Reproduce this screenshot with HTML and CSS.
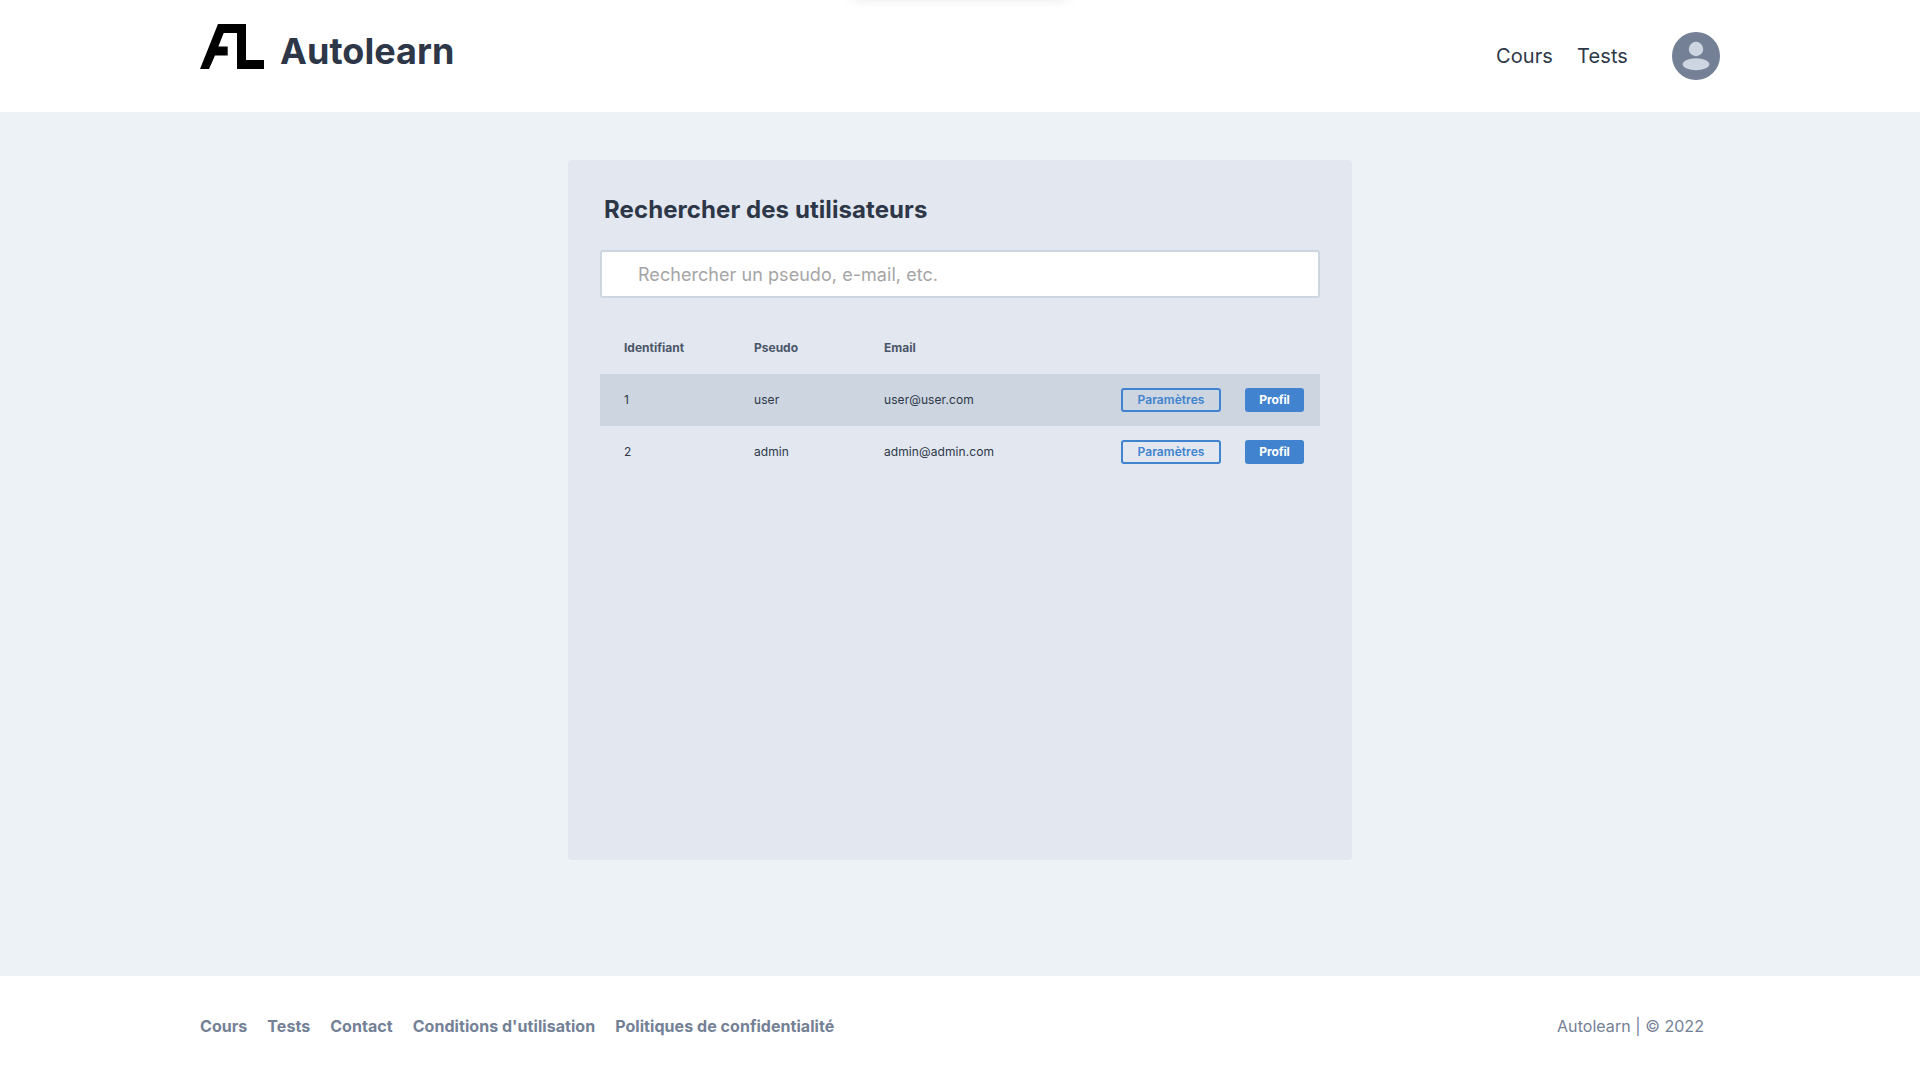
FILE: index.html
```
<!DOCTYPE html>
<html lang="fr">
<head>
<meta charset="utf-8">
<title>Autolearn</title>
<link rel="stylesheet" href="styles.css">
</head>
<body>
<div class="toast-shadow"></div>
<header class="header">
  <a class="brand">
    <svg class="logo" width="64" height="46" viewBox="0 0 64 46"><path d="M18 0H46V36H64V45H37V9H23.700L18.400 22.500H27.700V31.500H15L9 45H0Z"/></svg>
    <span class="brand-name">Autolearn</span>
  </a>
  <nav class="nav">
    <a class="nav-link">Cours</a>
    <a class="nav-link">Tests</a>
    <svg class="avatar" width="48" height="48" viewBox="0 0 48 48"><circle class="avatar-bg" cx="24" cy="24" r="24"/><circle class="avatar-fg" cx="24" cy="17" r="7.200"/><ellipse class="avatar-fg" cx="24" cy="32.300" rx="13.300" ry="6"/></svg>
  </nav>
</header>
<main class="main">
  <section class="panel">
    <h1 class="title">Rechercher des utilisateurs</h1>
    <input class="search" type="text" placeholder="Rechercher un pseudo, e-mail, etc.">
    <div class="table">
      <div class="row row-head"><span>Identifiant</span><span>Pseudo</span><span>Email</span></div>
      <div class="row row-shaded"><span>1</span><span>user</span><span>user@user.com</span><div class="actions"><button class="btn btn-outline">Paramètres</button><button class="btn btn-solid">Profil</button></div></div>
      <div class="row"><span>2</span><span>admin</span><span>admin@admin.com</span><div class="actions"><button class="btn btn-outline">Paramètres</button><button class="btn btn-solid">Profil</button></div></div>
    </div>
  </section>
</main>
<footer class="footer">
  <nav class="footer-links"><a>Cours</a><a>Tests</a><a>Contact</a><a>Conditions d'utilisation</a><a>Politiques de confidentialité</a></nav>
  <span class="copyright">Autolearn | © 2022</span>
</footer>
</body>
</html>
```
FILE: styles.css
```
* { box-sizing: border-box; }
body {
  margin: 0;
  height: 1080px;
  display: flex;
  flex-direction: column;
  overflow: hidden;
  background: #edf2f7;
  color: #2d3748;
  font-family: Inter, sans-serif;
}
.toast-shadow {
  position: absolute;
  top: -40px;
  left: 852px;
  width: 216px;
  height: 37px;
  box-shadow: 0 0 14px rgba(0, 0, 0, 0.13);
}
.header {
  height: 112px;
  padding: 0 200px;
  display: flex;
  justify-content: space-between;
  background: #fff;
}
.brand { display: flex; align-items: flex-start; gap: 16px; padding-top: 24px; }
.logo { display: block; }
.brand-name { font-size: 36px; line-height: 54px; font-weight: 700; letter-spacing: 0.05px; }
.nav { display: flex; align-items: center; gap: 24px; }
.nav-link { font-size: 20px; line-height: 30px; letter-spacing: 0.1px; }
.avatar { margin-left: 20px; }
.avatar-bg { fill: #738096; }
.avatar-fg { fill: #cdd5e0; }
.main { flex: 1; padding-top: 48px; }
.panel {
  width: 784px;
  height: 700px;
  margin: 0 auto;
  padding: 32px;
  border-radius: 4px;
  background: #e2e7f0;
}
.title { margin: 0 4px; font-size: 24px; line-height: 36px; font-weight: 700; letter-spacing: 0.08px; }
.search {
  display: block;
  width: 720px;
  height: 48px;
  margin: 22px 0 24px;
  padding: 0 36px;
  border: 2px solid #cdd5e1;
  border-radius: 3px;
  background: #fff;
  font: 18px Inter, sans-serif;
  letter-spacing: 0.05px;
}
.search::placeholder { color: #a5a5a5; opacity: 1; }
.row {
  height: 52px;
  padding: 0 16px 0 24px;
  display: grid;
  grid-template-columns: 130px 130px 1fr auto;
  align-items: center;
  font-size: 12px;
  letter-spacing: 0.08px;
}
.row > span { padding-bottom: 2px; }
.row-head { color: #4a5568; font-weight: 700; letter-spacing: 0; }
.row-shaded { background: #cdd5e0; }
.actions { display: flex; gap: 24px; }
.btn {
  height: 24px;
  padding: 0 0 2px;
  border: 2px solid #4183ce;
  border-radius: 3px;
  font: 600 12px Inter, sans-serif;
}
.btn-outline { width: 100px; background: transparent; color: #4183ce; letter-spacing: 0.05px; }
.btn-solid { width: 59px; background: #4183ce; color: #fff; font-weight: 700; letter-spacing: -0.1px; }
.footer {
  height: 104px;
  padding: 0 216px 4px 200px;
  display: flex;
  justify-content: space-between;
  align-items: center;
  background: #fff;
  color: #738096;
  font-size: 16px;
}
.footer-links { display: flex; gap: 20px; font-weight: 700; letter-spacing: 0.05px; }
.copyright { letter-spacing: 0.05px; }
```
